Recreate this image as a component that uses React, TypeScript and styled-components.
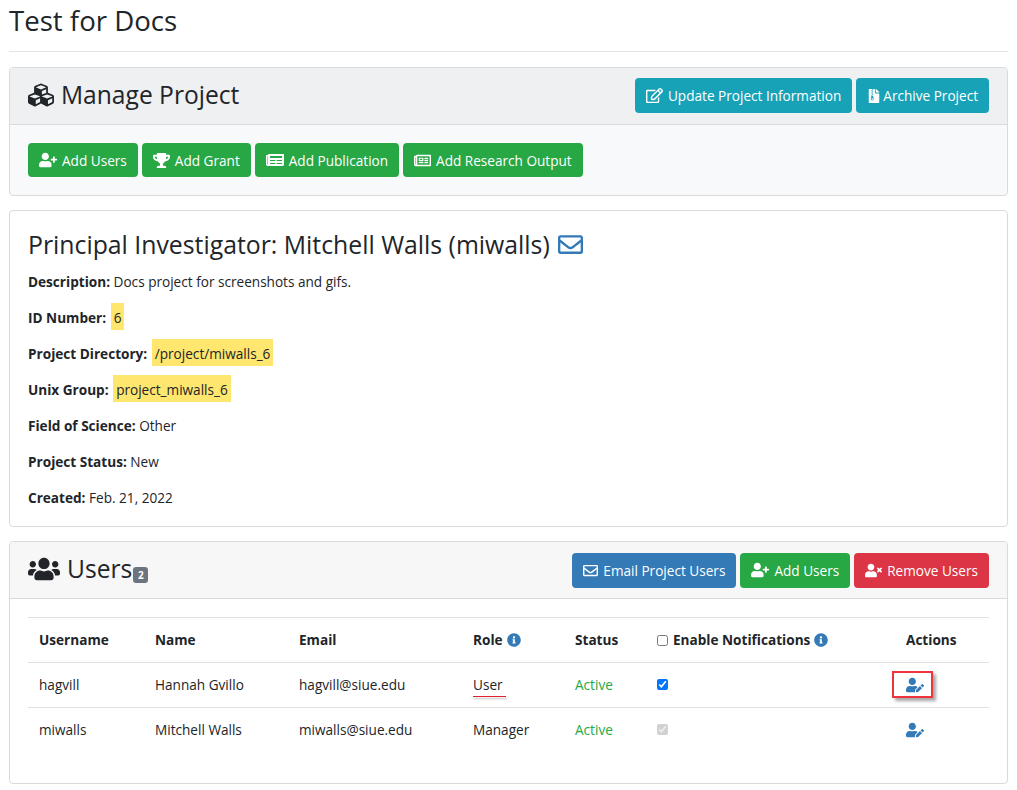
import React from 'react'
import styled, { createGlobalStyle } from 'styled-components'
import { FaCubes, FaFileArchive, FaInfoCircle, FaNewspaper, FaRegEdit, FaRegEnvelope, FaRegNewspaper, FaTrophy, FaUserEdit, FaUserPlus, FaUserTimes, FaUsers } from 'react-icons/fa'

const GlobalStyle = createGlobalStyle`
    html, body {
        margin: 0;
        background: #fff;
    }
    body {
        font-family: "Open Sans", "Noto Sans", "Liberation Sans", sans-serif;
        font-size: 13.6px;
        line-height: 21px;
        color: #212529;
    }
    * {
        box-sizing: border-box;
    }
`

const Page = styled.div`
    padding: 0 9px 6px;
`

const Title = styled.h1`
    margin: 0;
    height: 52px;
    padding-top: 1px;
    font-size: 27.6px;
    line-height: 38px;
    font-weight: 500;
    border-bottom: 1px solid #e3e4e6;
`

const Card = styled.section<{ $tint?: boolean }>`
    margin-top: 14px;
    border: 1px solid #d9dadb;
    border-radius: 4px;
    overflow: hidden;
    background: ${p => (p.$tint ? '#f8f9fa' : '#fff')};
    &:first-of-type {
        margin-top: 15px;
    }
`

const CardHeader = styled.header<{ $tint?: boolean }>`
    display: flex;
    align-items: center;
    justify-content: space-between;
    height: 57px;
    padding: 0 18px ${p => (p.$tint ? '1px' : '0')};
    border-bottom: 1px solid #d9dadb;
    background: ${p => (p.$tint ? '#eff0f2' : '#f7f7f7')};
`

const CardTitle = styled.h3`
    display: flex;
    align-items: center;
    gap: 7px;
    margin: 0;
    padding-bottom: 2px;
    font-size: 24.6px;
    line-height: 30px;
    font-weight: 400;
`

const CountBadge = styled.span`
    align-self: flex-end;
    margin: 0 0 2px -6px;
    width: 15px;
    height: 16px;
    border-radius: 3px;
    background: #6c757d;
    color: #fff;
    font-size: 10px;
    line-height: 16px;
    font-weight: 700;
    text-align: center;
`

const ButtonRow = styled.div`
    display: flex;
    gap: 4px;
`

const colours = {
    teal: '#17a2b8',
    green: '#28a745',
    blue: '#337ab7',
    red: '#dc3545',
}

const Button = styled.a<{ $colour: keyof typeof colours; $short?: boolean }>`
    display: inline-flex;
    align-items: center;
    gap: 5px;
    height: ${p => (p.$short ? '34px' : '35px')};
    padding: 0 11px;
    border-radius: 4px;
    background: ${p => colours[p.$colour]};
    color: #fff;
    white-space: nowrap;
    svg {
        flex: none;
    }
`

const ArchiveIcon = styled(FaFileArchive)`
    margin-right: -3px;
`

const ActionBody = styled.div`
    padding: 18px 18px 18px;
`

const InfoBody = styled.div`
    padding: 18px 18px 3px;
`

const Heading = styled.h3`
    display: flex;
    align-items: center;
    gap: 8px;
    margin: 0 0 11px;
    font-size: 24.8px;
    line-height: 31px;
    font-weight: 400;
    svg {
        color: #337ab7;
        font-size: 25px;
    }
`

const Field = styled.p`
    margin: 0 0 15px;
    strong {
        font-weight: 700;
    }
`

const Mark = styled.mark`
    background: #ffe66e;
    color: inherit;
    padding: 5px 3px 3px;
    margin-left: 1px;
`

const UsersBody = styled.div`
    padding: 18px 18px 30px;
`

const Table = styled.table`
    width: 961px;
    border-collapse: collapse;
    table-layout: fixed;
`

const Head = styled.th`
    height: 45px;
    padding: 0 11px 2px;
    border-top: 1px solid #dee2e6;
    font-weight: 700;
    text-align: left;
    vertical-align: middle;
    white-space: nowrap;
`

const Cell = styled.td`
    position: relative;
    height: 45px;
    padding: 0 11px 2px;
    border-top: 1px solid #dee2e6;
    text-align: left;
    vertical-align: middle;
    white-space: nowrap;
`

const Active = styled.span`
    color: #28a745;
`

const Check = styled.input`
    display: block;
    width: 11px;
    height: 11px;
    margin: 0;
`

const HeadCheck = styled.input`
    width: 11px;
    height: 11px;
    margin: 0 5px 0 0;
    vertical-align: -1px;
`

const HintIcon = styled(FaInfoCircle)`
    color: #337ab7;
    font-size: 14px;
    margin-left: 4px;
    vertical-align: -2px;
`

const EditIcon = styled(FaUserEdit)`
    display: block;
    margin-top: 2px;
    color: #337ab7;
    font-size: 18px;
`

/* red marks drawn over the screenshot */
const RedBox = styled.span`
    position: absolute;
    left: -3px;
    top: 8px;
    width: 41px;
    height: 27px;
    border: 2px solid #f0333d;
    box-shadow: 3px 3px 3px rgba(0, 0, 0, 0.35);
`

const RedLine = styled.span`
    position: absolute;
    left: 11px;
    top: 33px;
    width: 33px;
    height: 1px;
    background: #e0202c;
    box-shadow: 1px 2px 2px rgba(0, 0, 0, 0.3);
`

export default function App() {
    return (
        <Page>
            <GlobalStyle />
            <Title>Test for Docs</Title>

            <Card $tint>
                <CardHeader $tint>
                    <CardTitle><FaCubes size={26} />Manage Project</CardTitle>
                    <ButtonRow>
                        <Button $colour="teal"><FaRegEdit size={17} />Update Project Information</Button>
                        <Button $colour="teal"><ArchiveIcon size={14} />Archive Project</Button>
                    </ButtonRow>
                </CardHeader>
                <ActionBody>
                    <ButtonRow>
                        <Button $colour="green" $short><FaUserPlus size={18} />Add Users</Button>
                        <Button $colour="green" $short><FaTrophy size={17} />Add Grant</Button>
                        <Button $colour="green" $short><FaNewspaper size={18} />Add Publication</Button>
                        <Button $colour="green" $short><FaRegNewspaper size={17} />Add Research Output</Button>
                    </ButtonRow>
                </ActionBody>
            </Card>

            <Card>
                <InfoBody>
                    <Heading>Principal Investigator: Mitchell Walls (miwalls) <FaRegEnvelope /></Heading>
                    <Field><strong>Description:</strong> Docs project for screenshots and gifs.</Field>
                    <Field><strong>ID Number:</strong> <Mark>6</Mark></Field>
                    <Field><strong>Project Directory:</strong> <Mark>/project/miwalls_6</Mark></Field>
                    <Field><strong>Unix Group:</strong> <Mark>project_miwalls_6</Mark></Field>
                    <Field><strong>Field of Science:</strong> Other</Field>
                    <Field><strong>Project Status:</strong> New</Field>
                    <Field><strong>Created:</strong> Feb. 21, 2022</Field>
                </InfoBody>
            </Card>

            <Card>
                <CardHeader>
                    <CardTitle><FaUsers size={32} />Users<CountBadge>2</CountBadge></CardTitle>
                    <ButtonRow>
                        <Button $colour="blue"><FaRegEnvelope size={15} />Email Project Users</Button>
                        <Button $colour="green"><FaUserPlus size={18} />Add Users</Button>
                        <Button $colour="red"><FaUserTimes size={17} />Remove Users</Button>
                    </ButtonRow>
                </CardHeader>
                <UsersBody>
                    <Table>
                        <colgroup>
                            <col width={116} />
                            <col width={144} />
                            <col width={174} />
                            <col width={102} />
                            <col width={82} />
                            <col width={249} />
                            <col width={94} />
                        </colgroup>
                        <thead>
                            <tr>
                                <Head>Username</Head>
                                <Head>Name</Head>
                                <Head>Email</Head>
                                <Head>Role<HintIcon /></Head>
                                <Head>Status</Head>
                                <Head><HeadCheck type="checkbox" readOnly />Enable Notifications<HintIcon /></Head>
                                <Head>Actions</Head>
                            </tr>
                        </thead>
                        <tbody>
                            <tr>
                                <Cell>hagvill</Cell>
                                <Cell>Hannah Gvillo</Cell>
                                <Cell>hagvill@siue.edu</Cell>
                                <Cell>User<RedLine /></Cell>
                                <Cell><Active>Active</Active></Cell>
                                <Cell><Check type="checkbox" checked readOnly /></Cell>
                                <Cell><EditIcon /><RedBox /></Cell>
                            </tr>
                            <tr>
                                <Cell>miwalls</Cell>
                                <Cell>Mitchell Walls</Cell>
                                <Cell>miwalls@siue.edu</Cell>
                                <Cell>Manager</Cell>
                                <Cell><Active>Active</Active></Cell>
                                <Cell><Check type="checkbox" checked disabled readOnly /></Cell>
                                <Cell><EditIcon /></Cell>
                            </tr>
                        </tbody>
                    </Table>
                </UsersBody>
            </Card>
        </Page>
    )
}
